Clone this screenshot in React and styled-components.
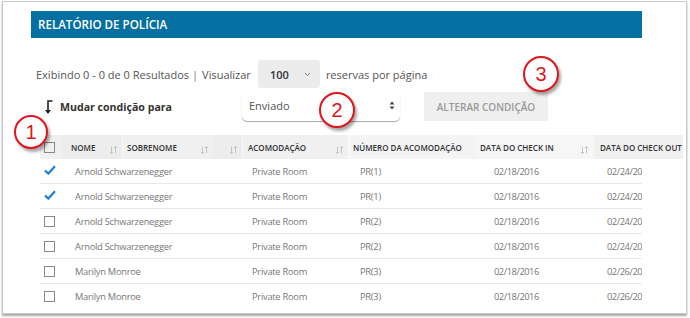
import React from "react";
import styled, { createGlobalStyle } from "styled-components";

const GlobalStyle = createGlobalStyle`
  html, body {
    margin: 0;
    padding: 0;
    background: #fff;
  }
  body {
    font-family: "Open Sans", "Liberation Sans", sans-serif;
  }
`;

const rows = [
  { name: "Arnold Schwarzenegger", room: "Private Room", num: "PR(1)", in: "02/18/2016", out: "02/24/20", checked: true },
  { name: "Arnold Schwarzenegger", room: "Private Room", num: "PR(1)", in: "02/18/2016", out: "02/24/20", checked: true },
  { name: "Arnold Schwarzenegger", room: "Private Room", num: "PR(2)", in: "02/18/2016", out: "02/24/20" },
  { name: "Arnold Schwarzenegger", room: "Private Room", num: "PR(2)", in: "02/18/2016", out: "02/24/20" },
  { name: "Marilyn Monroe", room: "Private Room", num: "PR(3)", in: "02/18/2016", out: "02/26/20" },
  { name: "Marilyn Monroe", room: "Private Room", num: "PR(3)", in: "02/18/2016", out: "02/26/20" },
];

const columns = "22px 60px 91px 29px 106px 130px 115px 90px";

const Page = styled.div`
  position: relative;
  width: 690px;
  height: 318px;
  overflow: hidden;
`;

const Frame = styled.div`
  box-sizing: border-box;
  margin: 1px 0 0 2px;
  width: 685px;
  height: 313px;
  border: 1px solid #c9c9c9;
  box-shadow: 0 2px 2px rgba(0, 0, 0, 0.35);
  background: #fff;
  overflow: hidden;
  padding: 9px 0 0 28px;
`;

const Panel = styled.div`
  width: 611px;
`;

const TitleBar = styled.div`
  height: 27px;
  background: #046fa1;
  color: #fff;
  font-size: 11.6px;
  font-weight: 600;
  display: flex;
  align-items: center;
  padding-left: 7px;
`;

const PagerLine = styled.div`
  display: flex;
  align-items: center;
  margin-top: 22px;
  padding-left: 5px;
  height: 28px;
  color: #555;
  font-size: 11px;
`;

const Divider = styled.span`
  margin: 0 4px 0 3px;
  color: #777;
`;

const PageSize = styled.div`
  display: flex;
  align-items: center;
  justify-content: space-between;
  box-sizing: border-box;
  width: 62px;
  height: 28px;
  margin: 0 6px 0 7px;
  padding: 0 9px 0 12px;
  background: #ececec;
  border-radius: 3px;
  color: #333;
  font-weight: 600;
  font-size: 11px;
`;

const ConditionLine = styled.div`
  display: flex;
  align-items: center;
  height: 29px;
  margin-top: 4px;
  padding-left: 13px;
`;

const ConditionLabel = styled.span`
  margin-left: 6px;
  width: 182px;
  font-size: 10.6px;
  font-weight: 700;
  color: #333;
  align-self: flex-start;
  padding-top: 8px;
`;

const StatusSelect = styled.div`
  display: flex;
  align-items: center;
  justify-content: space-between;
  box-sizing: border-box;
  width: 158px;
  height: 29px;
  padding: 0 5px 2px 7px;
  border-radius: 5px;
  box-shadow: 0 1px 1px rgba(0, 0, 0, 0.35);
  color: #555;
  font-size: 11px;
`;

const ActionButton = styled.div`
  display: flex;
  align-items: center;
  justify-content: center;
  width: 124px;
  height: 29px;
  margin-left: 24px;
  background: #efefef;
  color: #9a9a9a;
  font-size: 10px;
  font-weight: 600;
`;

const Table = styled.div`
  margin: 14px 0 0 9px;
`;

const HeadRow = styled.div`
  display: grid;
  grid-template-columns: ${columns};
  width: 643px;
  height: 24px;
  background: #f0f0f0;
`;

const HeadCell = styled.div`
  position: relative;
  display: flex;
  align-items: flex-start;
  padding: 7px 0 0 ${(p) => p.$pad || 5}px;
  border-left: ${(p) => (p.$edge ? "1px solid #fafafa" : "none")};
  font-size: 8px;
  font-weight: 600;
  color: #333;
  white-space: nowrap;
  background: ${(p) => p.$bg || "transparent"};
`;

const SortMark = styled.svg`
  position: absolute;
  right: 5px;
  top: 11px;
`;

const Body = styled.div`
  width: 602px;
  height: 148px;
  overflow: hidden;
`;

const Row = styled.div`
  display: grid;
  grid-template-columns: ${columns};
  height: 24px;
  border-bottom: 1px solid #e8e8e8;
  align-items: center;
  font-size: 9.3px;
  letter-spacing: -0.25px;
  color: #777;
  white-space: nowrap;
`;

const Cell = styled.div`
  padding-left: ${(p) => p.$pad || 0}px;
  grid-column: ${(p) => p.$span || "auto"};
  letter-spacing: ${(p) => (p.$date ? "-0.45px" : "inherit")};
`;

const Box = styled.div`
  box-sizing: border-box;
  width: 11px;
  height: 11px;
  margin-left: ${(p) => (p.$head ? 0 : 4)}px;
  border: 1.5px solid #888;
`;

const Callout = styled.div`
  position: absolute;
  left: ${(p) => p.$x}px;
  top: ${(p) => p.$y}px;
  box-sizing: border-box;
  width: ${(p) => p.$size}px;
  height: ${(p) => p.$size}px;
  border: 2px solid #e2141c;
  border-radius: 50%;
  background: #fff;
  box-shadow: 2px 3px 3px rgba(0, 0, 0, 0.35);
  display: flex;
  align-items: center;
  justify-content: center;
  font-family: "Liberation Sans", Arial, sans-serif;
  font-size: 20px;
  color: #e2141c;
`;

const Sort = () => (
  <SortMark width="7" height="8" viewBox="0 0 7 8">
    <path d="M1.5 0.5V7.5M0 6L1.5 7.5L3 6M5.5 7.5V0.5M4 2L5.5 0.5L7 2" stroke="#c4c4c4" strokeWidth="1" fill="none" />
  </SortMark>
);

const Check = () => (
  <svg width="12" height="10" viewBox="0 0 12 10" style={{ marginLeft: 4 }}>
    <path d="M1 5.5L4.3 8.6L11 1.3" stroke="#1d7fd1" strokeWidth="2.2" fill="none" />
  </svg>
);

const App = () => (
  <Page>
    <GlobalStyle />
    <Frame>
      <Panel>
        <TitleBar>RELATÓRIO DE POLÍCIA</TitleBar>
        <PagerLine>
          Exibindo 0 - 0 de 0 Resultados
          <Divider>|</Divider>
          Visualizar
          <PageSize>
            100
            <svg width="7" height="5" viewBox="0 0 7 5">
              <path d="M1 1L3.5 3.5L6 1" stroke="#777" strokeWidth="1" fill="none" />
            </svg>
          </PageSize>
          reservas por página
        </PagerLine>
        <ConditionLine>
          <svg width="10" height="16" viewBox="0 0 10 16">
            <path d="M8.5 2H4V14" stroke="#222" strokeWidth="1.6" fill="none" />
            <path d="M1 11L4 15L7 11Z" fill="#222" />
          </svg>
          <ConditionLabel>Mudar condição para</ConditionLabel>
          <StatusSelect>
            Enviado
            <svg width="6" height="9" viewBox="0 0 6 9">
              <path d="M0.5 3.5L3 0.5L5.5 3.5ZM0.5 5.5L3 8.5L5.5 5.5Z" fill="#444" />
            </svg>
          </StatusSelect>
          <ActionButton>ALTERAR CONDIÇÃO</ActionButton>
        </ConditionLine>
        <Table>
          <HeadRow>
            <HeadCell $pad={4}>
              <Box $head />
            </HeadCell>
            <HeadCell $pad={9} $bg="#ededed">NOME<Sort /></HeadCell>
            <HeadCell $edge $pad={4}>SOBRENOME<Sort /></HeadCell>
            <HeadCell $bg="#ededed"><Sort /></HeadCell>
            <HeadCell $edge $pad={5}>ACOMODAÇÃO<Sort /></HeadCell>
            <HeadCell $edge $pad={4} $bg="#f4f4f4">NÚMERO DA ACOMODAÇÃO</HeadCell>
            <HeadCell $pad={2} $bg="#f6f6f6">DATA DO CHECK IN<Sort /></HeadCell>
            <HeadCell $edge $pad={6}>DATA DO CHECK OUT</HeadCell>
          </HeadRow>
          <Body>
            {rows.map((r, i) => (
              <Row key={i}>
                <Cell>{r.checked ? <Check /> : <Box />}</Cell>
                <Cell $span="2 / 5" $pad={13}>{r.name}</Cell>
                <Cell $pad={10}>{r.room}</Cell>
                <Cell $pad={12}>{r.num}</Cell>
                <Cell $pad={16} $date>{r.in}</Cell>
                <Cell $pad={14} $date>{r.out}</Cell>
              </Row>
            ))}
          </Body>
        </Table>
      </Panel>
    </Frame>
    <Callout $x={14} $y={115} $size={34}>1</Callout>
    <Callout $x={319} $y={92} $size={36}>2</Callout>
    <Callout $x={523} $y={56} $size={36}>3</Callout>
  </Page>
);

export default App;
